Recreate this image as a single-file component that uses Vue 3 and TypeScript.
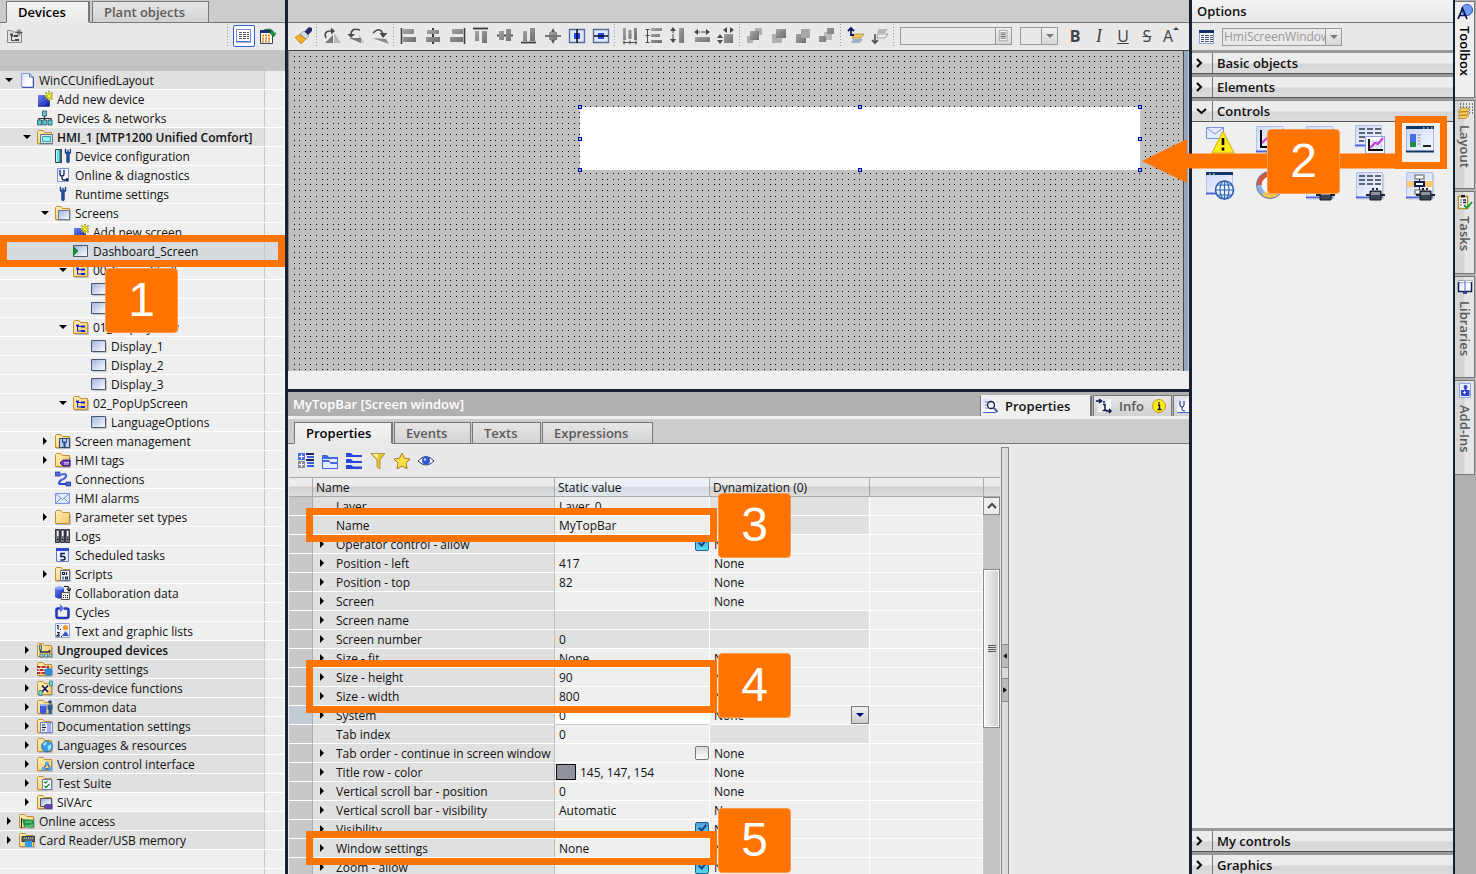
<script setup lang="ts">
import { ref } from 'vue'

interface TreeNode {
  label: string
  icon: string
  level: number
  arrow?: 'open' | 'closed'
  shade?: boolean
  bold?: boolean
  selected?: boolean
}

interface PropertyRow {
  name: string
  value?: string
  dyn?: string
  arrow?: boolean
  check?: 'on' | 'off'
  swatch?: boolean
  active?: boolean
  grayValue?: boolean
}

const folder = '<path d="M1.500 15.500h14V5" fill="none" stroke="#b9bcc6"/><path d="M.500 14.500v-12l1-1H6l1.500 2h7v11z" fill="url(#g-folder)" stroke="#c08f30"/>'
const wrench = '<path d="M10 1v4l1.500 1.500v7.500q1.500 2 3 0V6.500L16 5V1h-1v3h-1.500V2h-1v2H11V1z" fill="#1f4f9c" stroke="#163a78" stroke-width=".4"/>'
const star = '<path d="M12 0v10M7 5h10M8.500 1.500l7 7M15.500 1.500l-7 7" stroke="#8c8a10" stroke-width="1.600"/><path d="M12 1v8M8 5h8M9.500 2.500l5 5M14.500 2.500l-5 5" stroke="#ffff3c"/>'
const stetho = '<path d="M5 3v4q0 2 2 2t2-2V3M7 9v2q0 2 2 2h3" fill="none" stroke="#15205c" stroke-width="1.300"/><circle cx="12" cy="12.500" r="1.500" fill="#15205c"/>'

const icons: Record<string, string> = {
  page: '<path d="M2.500 1.500h8l3.500 3.500v10H2.500z" fill="url(#g-page)" stroke="#8a9fd6"/><path d="M10.500 1.500V5H14z" fill="#fff" stroke="#5c70b8"/><path d="M3 15.500h11.500V5" fill="none" stroke="#4257a6"/>',
  add: '<path d="M1 4h11v11H1z" fill="url(#g-deep)"/><path d="M1 15.200h11.300V8" fill="none" stroke="#101a80"/>' + star,
  network: '<path d="M7.500 5v4M2 11V8.500h12V11M7.500 8v3" fill="none" stroke="#222c3c" stroke-width="1.200"/><path d="M5.500 1h4v5h-4zM.500 10h4v5h-4zM5.700 10h4v5h-4zM11 10h4v5h-4z" fill="#55c8d4" stroke="#34505c" stroke-width=".8"/>',
  hmi: folder + '<path d="M3.500 5.500h12v9h-12z" fill="#dfe5ea" stroke="#5a7480"/><path d="M5.500 7.500h8v5h-8z" fill="#8ff4f6" stroke="#38a0a8"/>',
  config: '<path d="M.500 1.500h6v13h-6z" fill="#5fe4ec" stroke="#30424c"/><path d="M1.500 2v12" stroke="#bff"/><path d="M4.500 2v12h2V2z" fill="#4a5c66"/>' + wrench,
  diag: '<path d="M2.500 1.500h11v13h-11z" fill="url(#g-page)" stroke="#7b8fd4"/>' + stetho,
  wrench: '<g transform="translate(-5 0)">' + wrench + '</g>',
  screens: folder + '<path d="M3.500 5.500h11v9h-11z" fill="url(#g-screen)" stroke="#6b7794"/>',
  screen: '<path d="M.500 2.500h14v11H.500z" fill="url(#g-screen)" stroke="#4a566c"/><path d="M15.500 4v10.500H2" fill="none" stroke="#c4c8d0"/>',
  start: '<path d="M.500 2.500h14v11H.500z" fill="url(#g-screen)" stroke="#4a566c"/><path d="M0 3l5 5-5 5z" fill="#13922a" stroke="#0b6a1c" stroke-width=".6"/>',
  group: folder + '<path d="M4.500 6v6.500M4.500 7.500h5M5 12h5" fill="none" stroke="#1122dd"/><path d="M3 5.500h3v2H3zM8 6.500h4v2H8zM8 11h4v2H8z" fill="#1122dd"/>',
  manage: folder + '<path d="M4.500 5.500h10v9h-10z" fill="#b9cbe8" stroke="#384660"/><path d="M7 6v3l1.500 1.500V14h2v-3.500L12 9V6h-1v2.500H8V6z" fill="#1c4a96"/>',
  tags: folder + '<path d="M5 11l3-3h7v6H8z" fill="#6a3fb8" stroke="#3b1b80"/><path d="M9 10.500h5M9 12h5" stroke="#e6dcff" stroke-width=".8"/>',
  connect: '<path d="M0 1h5v4H0zM11 11h5v4h-5z" fill="#4a68e0" stroke="#20348f" stroke-width=".7"/><path d="M4 4.500q7-3 7 0T6 9q-4 4 0 4h5" fill="none" stroke="#2a49c8" stroke-width="2"/><path d="M4 4q7-3 6.500 0.500T5.500 9" fill="none" stroke="#9bb0ff" stroke-width=".6"/>',
  mail: '<path d="M.500 3.500h14v10H.500z" fill="#e3ebff" stroke="#7791dc"/><path d="M1 4l6.500 5.500L14 4M1 13l5-5M14 13L9 8" fill="none" stroke="#7791dc"/>',
  folder,
  logs: '<path d="M.500 1.500h4v13h-4zM5.500 1.500h4v13h-4zM10.500 1.500h4v13h-4z" fill="#70747e" stroke="#33363d"/><path d="M2 3h1.500v5H2zM7 3h1.500v5H7zM12 3h1.500v5H12z" fill="#eef"/><path d="M2 11.500h1.500M7 11.500h1.500M12 11.500h1.500" stroke="#111"/>',
  tasks: '<path d="M1.500 1.500h12v13h-12z" fill="#e9eeff" stroke="#6276c8"/><path d="M1 1h13v3H1z" fill="#2e49d2"/><path d="M10 6.500H6v3h2.200q1.800 0 1.800 1.700T8 13H5.500" fill="none" stroke="#111a50" stroke-width="1.500"/>',
  scripts: folder + '<path d="M5.500 4.500h9v10h-9z" fill="#f5f7ff" stroke="#5b6f9c"/><path d="M7.500 6.500h2v2h-2zM11.500 6v3M8 10.500v3M10.500 11h2v2h-2z" fill="none" stroke="#101830" stroke-width="1.100"/>',
  collab: '<path d="M0 3q4.500-3 9 0v9q-4.500 3-9 0z" fill="url(#g-deep)"/><ellipse cx="4.500" cy="3" rx="4.500" ry="1.500" fill="#8aa0ff"/><path d="M6.500 7.500h8v7h-8z" fill="#f4f4ec" stroke="#555"/><path d="M8 10.500h5M8 12.500h5" stroke="#222" stroke-dasharray="1 1"/><path d="M9 1.500h3.500q1.500 0 1.500 3M12 3.500l2 2.500 2-2.500" fill="none" stroke="#111" stroke-width="1.200"/>',
  cycles: '<path d="M5 4.500H3Q1.500 4.500 1.500 6v6q0 2 2 2h8q2 0 2-2V6q0-1.500-2-1.500H9" fill="none" stroke="#2438b8" stroke-width="2.600"/><path d="M5 0l4.500 4.500L5 8.500z" fill="#5f78ec"/>',
  lists: '<path d="M.500 .500h14v14H.500z" fill="#eef2ff" stroke="#9aa8d8"/><path d="M2 2.500h1v4M5 6.500h1M2 9.500h2v1.500l-2 2h3M6 13.500h1" fill="none" stroke="#111" stroke-width="1.100"/><circle cx="10.500" cy="4.500" r="2.600" fill="#f59a1c"/><path d="M10.500 8l3.500 5H7z" fill="#3350d2"/>',
  ungrouped: folder + '<path d="M3.500 3v7h9V8" fill="none" stroke="#222c3c" stroke-width="1.500"/><path d="M2.500 3h2v5h-2z" fill="#6fe0ea" stroke="#334" stroke-width=".7"/><path d="M3 12h3v3H3zM7.500 12h3v3h-3zM12 12h3v3h-3z" fill="#7de8f2" stroke="#445" stroke-width=".6"/>',
  security: folder + '<path d="M0 5h12v8H0z" fill="#b3291b"/><path d="M0 7.500h12M0 10.500h12M4 5v2.500M9 5v2.500M2 7.500v3M7 7.500v3M4 10.500V13" stroke="#fff" stroke-width=".9"/><circle cx="11.500" cy="11" r="4" fill="#2b8ad0"/>',
  cross: folder + '<path d="M4.500 5.500h7v7h-7z" fill="#fff4d0"/><path d="M5 5.500l6 6.500M11 5.500L5 12" stroke="#10184e" stroke-width="1.800"/><path d="M12.500 1h3v5h-3zM2 10.500h3v5H2z" fill="#65dce6" stroke="#37707a" stroke-width=".7"/>',
  common: folder + '<path d="M3 6q3-2 6.500 0v8Q6 16 3 14z" fill="#3d56dc"/><ellipse cx="6.200" cy="6" rx="3.200" ry="1.200" fill="#9db0ff"/><circle cx="13" cy="3" r="1.800" fill="#2b4a78"/><path d="M10.500 5.500h5v5l-1 .5v4h-3v-4l-1-.5z" fill="#2b5a92"/>',
  docs: folder + '<path d="M3.500 4.500h12v10h-12z" fill="#e8edff" stroke="#7080b8"/><path d="M5 7h3M5 9.500h4M5 12h3" stroke="#10183c" stroke-width="1.200"/><path d="M11 5v9M13 5v9" stroke="#5b74d8"/>',
  lang: folder + '<circle cx="10" cy="9.500" r="5.500" fill="#3a9be0" stroke="#1c62a8" stroke-width=".7"/><path d="M6 7q2-3 4-2l-1 3-2 1zM10.500 9l3.500-2 .5 4-3 3z" fill="#9fe0f4"/>',
  version: folder + '<path d="M10 7l-3.500 6h7z" fill="none" stroke="#2d55a8" stroke-width="1.300"/><circle cx="10" cy="7.500" r="2" fill="#4da8e8"/><circle cx="6.500" cy="13" r="2" fill="#4da8e8"/><circle cx="13.500" cy="13" r="2" fill="#4da8e8"/>',
  test: folder + '<path d="M5.500 4.500h9v10h-9z" fill="#f7f9ff" stroke="#6a7cb0"/><path d="M7 7l1.500 1 2-2M7.500 11l1.500 1.500 3.500-3.500" fill="none" stroke="#178a30" stroke-width="1.300"/>',
  sivarc: folder + '<path d="M3.500 4.500h11v8h-11z" fill="url(#g-screen)" stroke="#56585e"/><path d="M7 12l2-1.500h6v4H8z" fill="#6540b0" stroke="#38207a" stroke-width=".6"/>',
  online: folder + '<path d="M3 6l12 1v7l-3 1-7-1z" fill="#1c9448"/><path d="M2.500 5v10" stroke="#222"/><path d="M6 9h7M7 15v-3M9 15v-3M11 15v-3M13 14v-3" stroke="#aef0b8" stroke-width=".8"/>',
  card: folder + '<path d="M3 4.500h13v5H3z" fill="#5a636e" stroke="#2a323c"/><path d="M5 6h9" stroke="#d5dde5" stroke-dasharray="1 1"/><path d="M6 9h7v6H7.500L6 13.500z" fill="#2b9be8"/>',
}

const tools: Record<string, string> = {
  brush: '<path d="M11 6l5-5 3 1 0 3-5 5z" fill="#252a66"/><path d="M11 5l5 5-3 3-6-5z" fill="#d8dce8" stroke="#6b7086" stroke-width=".6"/><path d="M6.500 8.500l6.500 4.500-5 5L2 11.500z" fill="#f6b022" stroke="#a3631a" stroke-width=".6"/>',
  rotR: '<path d="M12 7l7 10H12z" fill="#b9b9b9"/><path d="M11 9L3 17h8z" fill="#777"/><path d="M4 12Q1 5 9 5" fill="none" stroke="#4a4a4a" stroke-width="1.600"/><path d="M9 1.500l4 3.500-4 3.500z" fill="#4a4a4a"/>',
  rotL: '<path d="M13 8l6 9h-6z" fill="#ccc"/><path d="M3 12h12v5z" fill="#777"/><path d="M14 4Q5 1 5 9" fill="none" stroke="#4a4a4a" stroke-width="1.600"/><path d="M1.500 8H9l-4 4z" fill="#4a4a4a"/>',
  rot: '<path d="M2 12l14 1 3 5z" fill="#8c8c8c"/><path d="M3 7Q10 0 13 8" fill="none" stroke="#4a4a4a" stroke-width="1.600"/><path d="M9.500 7h8L13 12z" fill="#4a4a4a"/>',
  alL: '<path d="M2.500 2v16" stroke="#3c3c3c" stroke-width="1.600"/><path d="M4 3h11v5H4zM4 11h13v5H4z" fill="url(#g-gray)"/>',
  alC: '<path d="M10 2v16" stroke="#3c3c3c" stroke-width="2"/><path d="M4 4h12v4H4zM3 11h14v5H3z" fill="url(#g-gray)"/>',
  alR: '<path d="M17.500 2v16" stroke="#3c3c3c" stroke-width="1.600"/><path d="M5 3h11v5H5zM3 11h13v5H3z" fill="url(#g-gray)"/>',
  alT: '<path d="M2 2.500h15" stroke="#3c3c3c" stroke-width="1.800"/><path d="M4 5h4v10H4zM11 5h5v12h-5z" fill="url(#g-gray)"/>',
  alM: '<path d="M2 9.500h16" stroke="#3c3c3c" stroke-width="1.800"/><path d="M4 5h5v9H4zM11 3h5v12h-5z" fill="url(#g-gray)"/>',
  alB: '<path d="M2 16.500h15" stroke="#3c3c3c" stroke-width="1.800"/><path d="M4 5h4v10H4zM11 2h5v13h-5z" fill="url(#g-gray)"/>',
  center: '<path d="M6 6h8v8H6z" fill="url(#g-gray)"/><path d="M2 9h16v2H2z" fill="#777"/><path d="M10 2l2 4H8zM10 18l2-4H8z" fill="#555"/>',
  midH: '<path d="M2.500 3.500h15v13h-15z" fill="#dbe6ff" stroke="#5e6f96" stroke-width="1.400"/><path d="M7 7h6v6H7z" fill="#2546f0"/><path d="M10 3v14" stroke="#000" stroke-width="1.400"/>',
  midV: '<path d="M2.500 3.500h15v13h-15z" fill="#dbe6ff" stroke="#5e6f96" stroke-width="1.400"/><path d="M7 7h6v6H7z" fill="#2546f0"/><path d="M3 10h14" stroke="#000" stroke-width="1.400"/>',
  spH: '<path d="M3 2h3v12H3zM8.500 4h3v9h-3zM14 2h3v12h-3z" fill="url(#g-gray)"/><path d="M3 16.500h14M4 14.500v4M10 14.500v4M16 14.500v4" stroke="#4a4a4a"/>',
  spV: '<path d="M7 2h11v3H7zM7 8h9v3H7zM7 14h11v3H7z" fill="url(#g-gray)"/><path d="M3.500 3v14M1.500 3.500h4M1.500 9.500h4M1.500 16.500h4" stroke="#4a4a4a"/>',
  szV: '<path d="M11 2h5v15h-5z" fill="url(#g-gray)"/><path d="M5 2v14" stroke="#4a4a4a" stroke-dasharray="5 1"/><path d="M5 1l3 4H2zM5 17l3-4H2z" fill="#4a4a4a"/>',
  szH: '<path d="M3 11h15v5H3z" fill="url(#g-gray)"/><path d="M3 6h14" stroke="#4a4a4a" stroke-dasharray="5 1"/><path d="M2 6l4-3v6zM18 6l-4-3v6z" fill="#4a4a4a"/>',
  szB: '<path d="M8 8h9v9H8z" fill="url(#g-gray)"/><path d="M7 4l4-3v6zM18 4l-4-3v6zM4 8l3 4H1zM4 18l3-4H1z" fill="#4a4a4a"/>',
  front: '<path d="M10 2h7v7h-7zM2 10h6v7H2z" fill="#b0b0b0"/><path d="M5 5h9v9H5z" fill="url(#g-gray)"/>',
  fwd: '<path d="M3 8h10v9H3z" fill="#b0b0b0"/><path d="M7 3h10v9H7z" fill="url(#g-gray)"/>',
  bwd: '<path d="M3 8h10v9H3z" fill="url(#g-gray)"/><path d="M8 3h9v9H8z" fill="#a8a8a8"/>',
  back: '<path d="M7 6h8v8H7z" fill="#b8b8b8"/><path d="M10 2h7v6h-7zM2 10h7v6H2z" fill="url(#g-gray)"/>',
  layUp: '<path d="M7 13h10l-3 4H5z" fill="#9db0c4"/><path d="M8 8h10l-3 4H6z" fill="#f4cc62" stroke="#a37a20" stroke-width=".7"/><path d="M2 5l3-3 3 3M5 3v6h3" fill="none" stroke="#101a5c" stroke-width="1.800"/>',
  layDn: '<path d="M9 3h9l-3 4H7z" fill="#b5b5b5"/><path d="M8 8h10l-3 4H7z" fill="#ededed" stroke="#8c8c8c" stroke-width=".8"/><path d="M5 8v8M2 14l3 3 3-3" fill="none" stroke="#4a4a4a" stroke-width="1.600"/>',
}
const toolGroups: string[][] = [
  ['brush'],
  ['rotR', 'rotL', 'rot'],
  ['alL', 'alC', 'alR', 'alT', 'alM', 'alB', 'center', 'midH', 'midV'],
  ['spH', 'spV', 'szV', 'szH', 'szB'],
  ['front', 'fwd', 'bwd', 'back'],
  ['layUp', 'layDn'],
]

const sheet = '<path d="M1.500 1.500h26v25h-26z" fill="url(#g-sheet)" stroke="#b4c0ea"/><path d="M1 26.500h27" stroke="#4a66dc" stroke-width="2"/><path d="M28.700 3v25H3" fill="none" stroke="#c6cad6"/>'
const plug = '<path d="M11 24h5M25 24h5M18 19v-2M22 19v-2" stroke="#1c2430" stroke-width="2"/><path d="M15 20h11v9H15z" fill="#39424e" stroke="#161c26"/><path d="M16 21h9v3h-9z" fill="#8a929c"/>'
const grid = '<path d="M4 5h6M12 5h6M20 5h6M4 9h6M12 9h6M20 9h6M4 13h6M12 13h6M20 13h6" stroke="#5c6670" stroke-width="2"/>'
const win = '<path d="M1.500 3.500h27v23h-27z" fill="url(#g-sheet)" stroke="#a9b6e4"/><path d="M1 1h28v3H1z" fill="#0f3768"/>'
const trend = '<path d="M6 5v17h20" fill="none" stroke="#000" stroke-width="2"/><path d="M7 18l7-7 4 3 7-8" fill="none" stroke="#c33bd8" stroke-width="2"/>'
const palette: { title: string; art: string }[] = [
  { title: 'Alarm control', art: '<path d="M1.500 2.500h17v11h-17z" fill="#e3ebff" stroke="#7791dc"/><path d="M2 3l8 6 8-6" fill="none" stroke="#7791dc"/><path d="M18 6l11 22H7z" fill="#ffec16" stroke="#c9ae10"/><path d="M18 13v7M18 22.500v3" stroke="#000" stroke-width="2.600"/>' },
  { title: 'Trend control', art: sheet + trend },
  { title: 'Table view', art: sheet + grid },
  { title: 'Trend companion', art: '<path d="M.500 .500h26v20h-26z" fill="url(#g-sheet)" stroke="#b4c0ea"/><path d="M0 20.500h11" stroke="#4a66dc" stroke-width="2"/><path d="M4 4h6M12 4h6M20 4h6M4 8h6M12 8h6M20 8h6M4 12h6M4 16h5" stroke="#5c6670" stroke-width="2"/><path d="M10.500 11.500h19v17h-19z" fill="#f7f9ff" stroke="#8fa0dc"/><path d="M18 15v9M22 15v9M26 15v9M15 17h12M15 21h12" stroke="#b7c3ee" stroke-width=".8"/><path d="M14 14v11h14" fill="none" stroke="#000" stroke-width="1.800"/><path d="M15 23l5-5 3 1 5-6" fill="none" stroke="#c33bd8" stroke-width="2"/>' },
  { title: 'Screen window', art: win + '<path d="M18 3h1.500M22 3h1.500M26 3h1.500" stroke="#fff"/><path d="M1 26.500h28" stroke="#0f3768" stroke-width="2"/><path d="M5 9h6v9H5z" fill="#4a6cf0"/><path d="M5 17h6v5H5z" fill="#1d8d48"/><path d="M12.500 10h3M12.500 13h3M12.500 16h3M12.500 19h3" stroke="#8490a4"/><path d="M18 21h8" stroke="#222" stroke-width="2"/>' },
  { title: 'Browser', art: '<path d="M1.500 3.500h26v19h-26z" fill="url(#g-sheet)" stroke="#b4c0ea"/><path d="M1 1h27v3H1z" fill="#0f3768"/><path d="M4 3h1.500M8 3h1.500" stroke="#fff"/><path d="M1 22.500h13" stroke="#4a66dc" stroke-width="2"/><circle cx="19.500" cy="19" r="9" fill="#eaf6ff" stroke="#2c62b0" stroke-width="1.600"/><path d="M19.500 10v18M10.500 19h18M12.500 14h14M12.500 24h14" fill="none" stroke="#2c62b0" stroke-width="1.200"/><ellipse cx="19.500" cy="19" rx="4.500" ry="9" fill="none" stroke="#2c62b0" stroke-width="1.200"/>' },
  { title: 'Gauge', art: '<circle cx="15" cy="14" r="11" fill="#f4f7ff" stroke="#8fb0dc" stroke-width="5"/><path d="M4 14A11 11 0 0 1 15 3" fill="none" stroke="#d8563c" stroke-width="5"/><path d="M8 22.500A11 11 0 0 0 22 22.500" fill="none" stroke="#f0c050" stroke-width="5"/><circle cx="15" cy="14" r="13.500" fill="none" stroke="#5f78b0"/>' },
  { title: 'Parameter set', art: sheet + grid + plug },
  { title: 'Process table', art: sheet + grid + plug },
  { title: 'Process diagram', art: sheet + '<path d="M2 10h26v6H2z" fill="#fcc878"/><path d="M10 4h9v4h-9zM10 19h9v4h-9z" fill="#fff" stroke="#8c9098" stroke-width="1.600"/><path d="M14.500 8v11" stroke="#222"/><path d="M10 11h9v4h-9z" fill="#fff" stroke="#0f1f4e" stroke-width="2"/>' + plug },
]

const nodes = ref<TreeNode[]>([
  { label: 'WinCCUnifiedLayout', icon: 'page', level: 0, arrow: 'open', shade: true },
  { label: 'Add new device', icon: 'add', level: 1 },
  { label: 'Devices & networks', icon: 'network', level: 1 },
  { label: 'HMI_1 [MTP1200 Unified Comfort]', icon: 'hmi', level: 1, arrow: 'open', shade: true, bold: true },
  { label: 'Device configuration', icon: 'config', level: 2 },
  { label: 'Online & diagnostics', icon: 'diag', level: 2 },
  { label: 'Runtime settings', icon: 'wrench', level: 2 },
  { label: 'Screens', icon: 'screens', level: 2, arrow: 'open' },
  { label: 'Add new screen', icon: 'add', level: 3 },
  { label: 'Dashboard_Screen', icon: 'start', level: 3, selected: true },
  { label: '00_ScreenShell', icon: 'group', level: 3, arrow: 'open' },
  { label: '', icon: 'screen', level: 4 },
  { label: '', icon: 'screen', level: 4 },
  { label: '01_DisplayView', icon: 'group', level: 3, arrow: 'open' },
  { label: 'Display_1', icon: 'screen', level: 4 },
  { label: 'Display_2', icon: 'screen', level: 4 },
  { label: 'Display_3', icon: 'screen', level: 4 },
  { label: '02_PopUpScreen', icon: 'group', level: 3, arrow: 'open' },
  { label: 'LanguageOptions', icon: 'screen', level: 4 },
  { label: 'Screen management', icon: 'manage', level: 2, arrow: 'closed' },
  { label: 'HMI tags', icon: 'tags', level: 2, arrow: 'closed' },
  { label: 'Connections', icon: 'connect', level: 2 },
  { label: 'HMI alarms', icon: 'mail', level: 2 },
  { label: 'Parameter set types', icon: 'folder', level: 2, arrow: 'closed' },
  { label: 'Logs', icon: 'logs', level: 2 },
  { label: 'Scheduled tasks', icon: 'tasks', level: 2 },
  { label: 'Scripts', icon: 'scripts', level: 2, arrow: 'closed' },
  { label: 'Collaboration data', icon: 'collab', level: 2 },
  { label: 'Cycles', icon: 'cycles', level: 2 },
  { label: 'Text and graphic lists', icon: 'lists', level: 2 },
  { label: 'Ungrouped devices', icon: 'ungrouped', level: 1, arrow: 'closed', shade: true, bold: true },
  { label: 'Security settings', icon: 'security', level: 1, arrow: 'closed', shade: true },
  { label: 'Cross-device functions', icon: 'cross', level: 1, arrow: 'closed', shade: true },
  { label: 'Common data', icon: 'common', level: 1, arrow: 'closed', shade: true },
  { label: 'Documentation settings', icon: 'docs', level: 1, arrow: 'closed', shade: true },
  { label: 'Languages & resources', icon: 'lang', level: 1, arrow: 'closed', shade: true },
  { label: 'Version control interface', icon: 'version', level: 1, arrow: 'closed', shade: true },
  { label: 'Test Suite', icon: 'test', level: 1, arrow: 'closed', shade: true },
  { label: 'SiVArc', icon: 'sivarc', level: 1, arrow: 'closed' },
  { label: 'Online access', icon: 'online', level: 0, arrow: 'closed', shade: true },
  { label: 'Card Reader/USB memory', icon: 'card', level: 0, arrow: 'closed', shade: true },
  { label: '', icon: '', level: 0 },
  { label: '', icon: '', level: 0 },
])

const rows = ref<PropertyRow[]>([
  { name: 'Layer', value: 'Layer_0' },
  { name: 'Name', value: 'MyTopBar' },
  { name: 'Operator control - allow', arrow: true, check: 'on', dyn: 'None' },
  { name: 'Position - left', arrow: true, value: '417', dyn: 'None' },
  { name: 'Position - top', arrow: true, value: '82', dyn: 'None' },
  { name: 'Screen', arrow: true, dyn: 'None' },
  { name: 'Screen name', arrow: true, grayValue: true },
  { name: 'Screen number', arrow: true, value: '0', grayValue: true },
  { name: 'Size - fit', arrow: true, value: 'None', dyn: 'None' },
  { name: 'Size - height', arrow: true, value: '90', dyn: 'None' },
  { name: 'Size - width', arrow: true, value: '800', dyn: 'None' },
  { name: 'System', arrow: true, value: '0', dyn: 'None', active: true },
  { name: 'Tab index', value: '0' },
  { name: 'Tab order - continue in screen window', arrow: true, check: 'off', dyn: 'None' },
  { name: 'Title row - color', arrow: true, value: '145, 147, 154', swatch: true, dyn: 'None' },
  { name: 'Vertical scroll bar - position', arrow: true, value: '0', dyn: 'None' },
  { name: 'Vertical scroll bar - visibility', arrow: true, value: 'Automatic', dyn: 'None' },
  { name: 'Visibility', arrow: true, check: 'on', dyn: 'None' },
  { name: 'Window settings', arrow: true, value: 'None', dyn: 'None' },
  { name: 'Zoom - allow', arrow: true, check: 'on', dyn: 'None' },
])

const dots = [0, 5, 11, 16, 22]
const dotPath = dots.map((y) => dots.map((x) => `M${x} ${y}h1v1h-1z`).join('')).join('')
const handles = ['tl', 'tc', 'tr', 'ml', 'mr', 'bl', 'bc', 'br']
const inspectorTabs = ['Properties', 'Events', 'Texts', 'Expressions']

const sideTabs = [
  { label: 'Toolbox', cls: 'toolbox', art: '<circle cx="10" cy="6" r="5.500" fill="#6f9cf8" stroke="#2f56b8"/><path d="M1 15L5.500 4.500 10 15M3 11.500h5.500" fill="none" stroke="#0c1450" stroke-width="1.700"/>' },
  { label: 'Layout', cls: 'layout', art: '<path d="M3 1h13M3 4h13M6 7h10M9 10h7" stroke="#111" stroke-dasharray="1 2"/><path d="M4 5h8l-3 4H1zM4 8.500h8l-3 4H1zM4 12h8l-3 3.500H1z" fill="#f7cd63" stroke="#a87a1e" stroke-width=".7"/>' },
  { label: 'Tasks', cls: 'tasks', art: '<path d="M1.500 2.500h9v12h-9z" fill="#fff" stroke="#b98b20" stroke-width="1.400"/><path d="M4 1h4v2.500H4z" fill="#222"/><path d="M3.500 6h1M6 6h3M3.500 8.500h1M6 8.500h3M3.500 11h1" stroke="#111a50" stroke-width="1.300"/><path d="M7 11l3 3 5-6" fill="none" stroke="#12a02e" stroke-width="1.900"/>' },
  { label: 'Libraries', cls: 'libraries', art: '<path d="M1.500 2.500h13v10h-13z" fill="url(#g-page)" stroke="#141d58" stroke-width="1.500"/><path d="M1 2.500h14" stroke="#fff"/><path d="M8 2v11" stroke="#4a62d0"/><path d="M6 14h4" stroke="#141d58" stroke-width="1.500"/>' },
  { label: 'Add-Ins', cls: 'addins', art: '<path d="M2.500 .500h11v14h-11z" fill="#eef2ff" stroke="#8fa2e8"/><circle cx="8.500" cy="4" r="2" fill="#2b46cc"/><path d="M4 7h8.500v6H4zM7.500 5h2v2h-2z" fill="#2b46cc"/><path d="M6 9.500h3M7.500 8v3" stroke="#fff"/>' },
]
</script>

<template>
  <div class="app">
    <svg class="defs" width="0" height="0" aria-hidden="true">
      <linearGradient id="g-folder" x1="0" y1="0" x2="1" y2="1"><stop offset="0" stop-color="#fff0b8" /><stop offset="1" stop-color="#f3c766" /></linearGradient>
      <linearGradient id="g-page" x1="0" y1="0" x2="1" y2="1"><stop offset="0" stop-color="#cbd8fa" /><stop offset=".6" stop-color="#fff" /></linearGradient>
      <linearGradient id="g-sheet" x1="0" y1="0" x2="1" y2="1"><stop offset="0" stop-color="#ccd8fa" /><stop offset="1" stop-color="#fafbff" /></linearGradient>
      <linearGradient id="g-deep" x1="0" y1="0" x2="1" y2="1"><stop offset="0" stop-color="#6c86f4" /><stop offset="1" stop-color="#1220b4" /></linearGradient>
      <linearGradient id="g-screen" x1="0" y1="0" x2="1" y2="1"><stop offset="0" stop-color="#9fb2de" /><stop offset="1" stop-color="#fff" /></linearGradient>
      <linearGradient id="g-gray" x1="0" y1="0" x2="1" y2="1"><stop offset="0" stop-color="#a6a6a6" /><stop offset="1" stop-color="#6f6f6f" /></linearGradient>
    </svg>

    <aside class="project">
      <div class="tabbar">
        <button class="tab current">Devices</button>
        <button class="tab wide">Plant objects</button>
      </div>
      <div class="toolbar project-tools">
        <button class="icon-btn" aria-label="New group">
          <svg viewBox="0 0 16 16"><path d="M.5 14.500v-12h4l1 1.500h9v10.500z" fill="#e2e2e2" stroke="#888" /><path d="M4.500 6v6.500h3M4.500 8h3" fill="none" stroke="#444" /><path d="M3 5.500h3v2H3zM7 7h4v2H7zM8 11h4v2H8z" fill="#444" /><path d="M12 1v7M8.500 4.500h7M10 2.500l4 4M14 2.500l-4 4" stroke="#555" /></svg>
        </button>
        <span class="grow"></span>
        <i class="sep"></i>
        <button class="icon-btn on" aria-label="List view">
          <svg viewBox="0 0 16 16"><path d="M.5 1.500h14v12H.5z" fill="#fff" stroke="#7d8ed0" /><path d="M0 14h15" stroke="#3c56c8" /><path d="M3 4.500h10M3 6.500h10M3 8.500h10M3 10.500h10" stroke="#555" stroke-dasharray="3 1" /></svg>
        </button>
        <button class="icon-btn" aria-label="Export">
          <svg viewBox="0 0 16 16"><path d="M.5 3.500h12v12H.5z" fill="#fff" stroke="#345" /><path d="M0 2h11v3H0z" fill="#13336e" /><path d="M2 7.500h9M2 10.500h9M2 13.500h9" stroke="#e08a1c" stroke-width="2" stroke-dasharray="2 1" /><path d="M4 2q6-2 8 3h-2l3.500 4L16 5h-2Q12-1 4 2z" fill="#1c9636" stroke="#0c6a20" stroke-width=".6" /></svg>
        </button>
      </div>
      <div class="band"></div>
      <ul class="tree">
        <li v-for="(n, i) in nodes" :key="i" class="node" :class="{ shade: n.shade, bold: n.bold, selected: n.selected }">
          <span class="cell" :style="{ paddingLeft: n.level * 18 + 1 + 'px' }">
            <button v-if="n.arrow" class="twist" :aria-label="'Toggle ' + n.label">
              <svg viewBox="0 0 16 16"><path :d="n.arrow === 'open' ? 'M4 6h8l-4 4z' : 'M6 4l4 4-4 4z'" /></svg>
            </button>
            <span v-else class="twist"></span>
            <svg v-if="n.icon" class="ico" viewBox="0 0 16 16" v-html="icons[n.icon]"></svg>
            <span class="lbl">{{ n.label }}</span>
          </span>
          <span class="status"></span>
        </li>
      </ul>
      <div class="mark mark-tree"></div>
      <div class="badge badge-1">1</div>
    </aside>

    <main class="center">
      <div class="topband"></div>
      <div class="toolbar editor-tools">
        <template v-for="(g, gi) in toolGroups" :key="gi">
          <button v-for="t in g" :key="t" class="tool" :aria-label="t"><svg viewBox="0 0 20 20" v-html="tools[t]"></svg></button>
          <i class="sep"></i>
        </template>
        <span class="combo font-box"><input type="text" aria-label="Font" /><button aria-label="Choose font"><svg viewBox="0 0 16 16"><path d="M2.500 1.500h9v12h-9z" fill="#f4f4f4" stroke="#999" /><path d="M4 4.500h6M4 6.500h6M4 8.500h6M4 10.500h6" stroke="#555" /></svg></button></span>
        <span class="combo size-box"><select aria-label="Font size"></select><i class="drop"></i></span>
        <button class="tool fmt b">B</button>
        <button class="tool fmt i">I</button>
        <button class="tool fmt u">U</button>
        <button class="tool fmt s">S</button>
        <button class="tool fmt a">A<svg viewBox="0 0 6 4"><path d="M3 0l3 3H0z" /></svg></button>
      </div>
      <div class="stage">
        <div class="canvas">
          <svg class="dots" width="100%" height="100%" aria-hidden="true">
            <pattern id="dot-grid" x="5" y="5" width="28" height="28" patternUnits="userSpaceOnUse"><path :d="dotPath" fill="#000" shape-rendering="crispEdges" /></pattern>
            <rect width="100%" height="100%" fill="url(#dot-grid)" />
          </svg>
          <div class="object"><i v-for="h in handles" :key="h" :class="h"></i></div>
        </div>
        <div class="stage-edge"></div>
      </div>
      <div class="stage-foot"></div>

      <section class="inspector">
        <header class="title">
          <h2>MyTopBar [Screen window]</h2>
          <button class="pane current"><svg viewBox="0 0 16 16"><path d="M1 1h13v13H1z" fill="url(#g-page)" /><path d="M1 14.500h13" stroke="#4a66dc" /><path d="M3 4h4M3 7h3M3 10h4" stroke="#889" /><circle cx="9" cy="7" r="3.500" fill="#eaf4ff" stroke="#151c48" stroke-width="1.300" /><path d="M11.500 9.500l4 4.500" stroke="#4a62a8" stroke-width="2" /></svg>Properties</button>
          <button class="pane info"><svg viewBox="0 0 16 16"><path d="M2 1h13v13H2z" fill="url(#g-page)" /><path d="M0 3h5M3 1l2.500 2L3 5M10 13h5M13 11l2 2-2 2M7 6.500h2v6M6.500 12.500h5M8 3v2" fill="none" stroke="#0e1548" stroke-width="1.500" /></svg>Info<svg class="tip" viewBox="0 0 16 16"><circle cx="8" cy="8" r="6.500" fill="#ffe920" stroke="#c09c10" /><path d="M7 7h1.500v4.500M6.500 11.500h4M8 4v1.500" fill="none" stroke="#111" stroke-width="1.400" /></svg></button>
          <button class="pane cut" aria-label="Diagnostics"><svg viewBox="0 0 16 16"><path d="M2 1h13v13H2z" fill="url(#g-page)" /><path d="M2 14.500h13" stroke="#4a66dc" /><path d="M5 3v4q0 2 2 2t2-2V3M7 9v2q0 2 3 2" fill="none" stroke="#15205c" /></svg></button>
        </header>
        <div class="subtabs">
          <button v-for="(t, i) in inspectorTabs" :key="t" class="tab" :class="{ current: i === 0 }">{{ t }}</button>
        </div>
        <div class="body">
          <div class="props">
            <div class="prop-tools">
              <button aria-label="Expand"><svg viewBox="0 0 18 18"><path d="M1 1h7v7H1z" fill="#4f6bea" /><path d="M1 9h7v7H1z" fill="#8a8f9c" /><path d="M4.500 2v5M2 4.500h5M4.500 10v5M2 12.500h5" stroke="#fff" /><path d="M9 2h8M9 8h8" stroke="#16245e" stroke-width="2" /><path d="M10 5h7M10 11h7M10 14h7" stroke="#3c5ae6" stroke-width="2" /></svg></button>
              <button aria-label="Groups"><svg viewBox="0 0 18 18"><path d="M1 17V3h5l2 2h9v12z" fill="#4465e4" /><path d="M2 10h6l2 2h6v4H2zM2 7h14v3H9L8 8H2z" fill="#e6edff" /></svg></button>
              <button aria-label="All groups"><svg viewBox="0 0 18 18"><path d="M1 1h5l2 2h9v2H1zM1 7h5l2 2h9v2H1zM1 13h5l2 1.500h9V17H1z" fill="#2845dc" /></svg></button>
              <button aria-label="Filter"><svg viewBox="0 0 18 18"><path d="M2 1.500h14l-5 6.500v9l-3-2V8z" fill="#e8c43a" stroke="#a8872a" stroke-width=".8" /><path d="M4 2h5L8.500 7z" fill="#fff3a8" /></svg></button>
              <button aria-label="Favorites"><svg viewBox="0 0 18 18"><path d="M9 1l2.500 5.200 5.500.8-4 4 1 5.700-5-2.700-5 2.700L5 11 1 7l5.500-.8z" fill="#ffe04a" stroke="#a57a14" /></svg></button>
              <button aria-label="Preview"><svg viewBox="0 0 18 18"><path d="M1 9q8-9 16 0-8 8-16 0z" fill="#fff" stroke="#2b3a70" /><circle cx="9" cy="8.500" r="4" fill="#3153d8" /><circle cx="8" cy="7.500" r="1.300" fill="#c6d6ff" /></svg></button>
            </div>
            <div class="grid">
              <table>
                <colgroup><col class="c0" /><col class="c1" /><col class="c2" /><col class="c3" /><col /></colgroup>
                <thead>
                  <tr><th></th><th>Name</th><th class="hot">Static value</th><th>Dynamization (0)</th><th></th></tr>
                </thead>
                <tbody>
                  <tr v-for="r in rows" :key="r.name" :class="{ active: r.active }">
                    <td class="gut"></td>
                    <td class="nm"><span class="vbox"><svg viewBox="0 0 16 16"><path v-if="r.arrow" d="M6 4l4 4-4 4z" /></svg><span class="vtext">{{ r.name }}</span></span></td>
                    <td class="val" :class="{ gray: r.grayValue }">
                      <span class="vbox">
                        <i v-if="r.swatch" class="swatch"></i>
                        <input v-if="r.active" v-model="r.value" type="text" :aria-label="r.name" />
                        <span v-else class="vtext">{{ r.value }}</span>
                        <input v-if="r.check" type="checkbox" :checked="r.check === 'on'" :aria-label="r.name" />
                      </span>
                    </td>
                    <td class="dyn" :class="{ gray: !r.dyn }">
                      <span class="vbox"><span class="vtext">{{ r.dyn }}</span><button v-if="r.active" class="pick" aria-label="Choose dynamization"><svg viewBox="0 0 16 14"><path d="M4 5h8l-4 4z" fill="#00007c" /></svg></button></span>
                    </td>
                    <td></td>
                  </tr>
                </tbody>
              </table>
              <div class="scroll">
                <span class="corner"></span>
                <button class="up" aria-label="Scroll up"><svg viewBox="0 0 14 14"><path d="M3 9l4-4 4 4" fill="none" stroke="#444" stroke-width="2" /></svg></button>
                <span class="thumb"><i></i></span>
              </div>
              <div class="mark m3"></div>
              <div class="mark m4"></div>
              <div class="mark m5"></div>
              <div class="badge b3">3</div>
              <div class="badge b4">4</div>
              <div class="badge b5">5</div>
            </div>
          </div>
          <div class="splitter"><button aria-label="Collapse left"><svg viewBox="0 0 6 24"><path d="M5 9v6l-4-3z" /></svg></button><button aria-label="Collapse right"><svg viewBox="0 0 6 24"><path d="M1 9v6l4-3z" /></svg></button></div>
          <div class="rest"></div>
        </div>
      </section>
    </main>

    <aside class="options">
      <h2 class="opt-title">Options</h2>
      <div class="toolbar opt-tools">
        <svg viewBox="0 0 16 16"><path d="M.5 1.500h14v13H.5z" fill="#f4f6ff" stroke="#8fa2d8" /><path d="M0 1h15v3H0z" fill="#12316a" /><path d="M2 6.500h3M2 8.500h3M2 10.500h3M2 12.500h3M6 6.500h4M6 8.500h4M6 10.500h4M6 12.500h4M11 6.500h3M11 8.500h3M11 10.500h3M11 12.500h3" stroke="#4a5870" /></svg>
        <span class="combo obj-box"><select aria-label="Object type" disabled><option>HmiScreenWindow</option></select><i class="drop"></i></span>
      </div>
      <button class="acc"><svg viewBox="0 0 20 20"><path d="M5 6l4 4-4 4" /></svg><span>Basic objects</span></button>
      <button class="acc"><svg viewBox="0 0 20 20"><path d="M5 6l4 4-4 4" /></svg><span>Elements</span></button>
      <button class="acc"><svg viewBox="0 0 20 20"><path d="M5 8l4.500 4 4.500-4" /></svg><span>Controls</span></button>
      <div class="palette">
        <button v-for="p in palette" :key="p.title" :aria-label="p.title"><svg viewBox="0 0 30 30" v-html="p.art"></svg></button>
        <div class="mark m2"></div>
        <svg class="arrow" viewBox="0 0 254 44" aria-hidden="true"><path d="M0 22L45 0v14.500h209v15H45V44z" /></svg>
        <div class="badge b2">2</div>
      </div>
      <button class="acc"><svg viewBox="0 0 20 20"><path d="M5 6l4 4-4 4" /></svg><span>My controls</span></button>
      <button class="acc"><svg viewBox="0 0 20 20"><path d="M5 6l4 4-4 4" /></svg><span>Graphics</span></button>
    </aside>

    <nav class="side">
      <button v-for="(t, i) in sideTabs" :key="t.label" :class="[t.cls, { current: i === 0 }]"><svg viewBox="0 0 16 16" v-html="t.art"></svg><span>{{ t.label }}</span></button>
    </nav>
  </div>
</template>

<style>
body {
  margin: 0;
}
</style>

<style scoped>
.app {
  display: flex;
  height: 100vh;
  overflow: hidden;
  background: #1a2033;
  color: #111;
  font: 12px/18px "Open Sans", "Noto Sans", sans-serif;
}
.app *,
.app *::before {
  box-sizing: border-box;
}
.defs {
  position: absolute;
}
button,
input,
select {
  margin: 0;
  padding: 0;
  border: 0;
  background: none;
  color: inherit;
  font: inherit;
}
h2 {
  margin: 0;
}
svg {
  display: block;
  flex: none;
}
.grow {
  flex: 1;
}
.toolbar {
  display: flex;
  align-items: center;
  flex: none;
  height: 27px;
  padding-bottom: 1px;
  background: #e9e9e9;
}
.sep {
  flex: none;
  width: 5px;
  height: 24px;
  background: repeating-linear-gradient(#999 0 1px, transparent 1px 3px) 1px 0 / 1px 100% no-repeat;
}

/* tabs */
.tabbar {
  display: flex;
  gap: 2px;
  height: 23px;
  padding: 1px 0 0 6px;
  background: #ccc;
  border-bottom: 1px solid #777;
}
.tab {
  height: 22px;
  padding: 0 11px;
  border: 1px solid #777;
  background: linear-gradient(#e6e6e6, #d2d2d2);
  color: #5a5a5a;
  font-size: 13px;
  font-weight: 600;
  line-height: 18px;
  text-align: left;
}
.tab.current {
  background: linear-gradient(#f4f4f4, #e9e9e9);
  border-bottom-color: #e9e9e9;
  border-right-width: 2px;
  color: #000;
}
.tabbar .tab {
  width: 84px;
}
.tabbar .wide {
  width: 117px;
}

/* project tree */
.project {
  position: relative;
  z-index: 2;
  display: flex;
  flex: 0 0 285px;
  flex-direction: column;
  min-width: 0;
}
.project-tools {
  padding: 0 6px 1px;
}
.icon-btn {
  display: grid;
  place-items: center;
  width: 22px;
  height: 22px;
}
.icon-btn:first-child {
  width: 18px;
}
.icon-btn.on {
  border: 1px solid #2f62d8;
  border-radius: 2px;
  background: #fff;
  margin: 0 2px;
}
.icon-btn svg {
  width: 16px;
  height: 16px;
}
.band {
  flex: none;
  height: 21px;
  background: #c3c3c3;
}
.tree {
  flex: 1;
  min-height: 0;
  margin: 0;
  padding: 0;
  overflow: hidden;
  background: #efefef;
  list-style: none;
}
.node {
  display: flex;
  height: 19px;
  border-bottom: 1px solid #fff;
  border-right: 1px solid #fff;
}
.cell {
  display: flex;
  flex: 1;
  align-items: center;
  min-width: 0;
  border-right: 1px solid #c8c8c8;
}
.status {
  flex: none;
  width: 19px;
}
.shade {
  background: #e0e0e0;
}
.shade .status {
  background: #ececec;
}
.bold {
  font-weight: 600;
}
.selected {
  background: #d6dbdf;
}
.twist {
  flex: none;
  width: 16px;
  height: 16px;
}
.twist svg {
  width: 16px;
  height: 16px;
}
.ico {
  width: 16px;
  height: 16px;
  margin: 0 4px 0 2px;
}
.lbl {
  padding-top: 1px;
  white-space: nowrap;
}

/* callouts */
.mark {
  position: absolute;
  z-index: 3;
  border: 7px solid #ff7300;
  pointer-events: none;
}
.badge {
  position: absolute;
  z-index: 4;
  width: 73px;
  height: 65px;
  border: 1px solid #ff9a4a;
  border-radius: 4px;
  background: #ff7300;
  color: #fff;
  font: 48px/62px "Liberation Sans", Arial, sans-serif;
  text-align: center;
}
.mark-tree {
  top: 235px;
  right: 0;
  left: 0;
  height: 32px;
}
.badge-1 {
  top: 268px;
  left: 105px;
}

/* editor */
.center {
  display: flex;
  flex: 1;
  flex-direction: column;
  min-width: 0;
  margin: 0 3px;
}
.topband {
  flex: none;
  height: 23px;
  background: #ccc;
  border-bottom: 1px solid #777;
}
.editor-tools {
  padding-left: 3px;
  overflow: hidden;
}
.tool {
  display: grid;
  flex: none;
  place-items: center;
  width: 24px;
  height: 24px;
}
.tool svg {
  width: 20px;
  height: 20px;
}
.combo {
  display: flex;
  flex: none;
  height: 18px;
  border: 1px solid #999;
  background: #e9e9e9;
}
.combo input,
.combo select {
  flex: 1;
  min-width: 0;
  appearance: none;
}
.combo button,
.drop {
  display: grid;
  flex: none;
  place-items: center;
  width: 16px;
  border-left: 1px solid #999;
  background: linear-gradient(#f0f0f0, #d8d8d8);
}
.combo svg {
  width: 14px;
  height: 14px;
}
.drop::before {
  content: "";
  border: 4px solid transparent;
  border-top-color: #777;
  border-bottom-width: 0;
}
.font-box {
  width: 112px;
  margin: 0 8px 0 3px;
}
.size-box {
  width: 38px;
  margin-right: 5px;
}
.fmt {
  color: #444;
  font-size: 16px;
  line-height: 22px;
}
.fmt.b {
  font-weight: 700;
}
.fmt.i {
  font-family: "Liberation Serif", serif;
  font-size: 18px;
  font-style: italic;
}
.fmt.u {
  text-decoration: underline;
}
.fmt.s {
  text-decoration: line-through;
}
.fmt.a {
  display: flex;
  align-items: center;
  justify-content: center;
}
.fmt.a svg {
  align-self: flex-start;
  width: 6px;
  height: 10px;
  fill: #444;
}
.stage {
  display: flex;
  flex: 0 0 321px;
  border-top: 1px solid #444;
  border-left: 1px solid #888;
}
.canvas {
  position: relative;
  flex: 1;
  overflow: hidden;
  border-right: 1px solid #444;
  background: #c0c0c0;
}
.dots {
  position: absolute;
  inset: 0;
}
.stage-edge {
  flex: none;
  width: 5px;
  background: #94a9bb;
  border-right: 1px solid #ccc;
}
.object {
  position: absolute;
  top: 56px;
  left: 291px;
  width: 560px;
  height: 63px;
  background: #fff;
}
.object i {
  position: absolute;
  width: 4px;
  height: 4px;
  margin: -2px;
  border: 1px solid #00009c;
  background: #4fe0f8;
}
.tl,
.tc,
.tr {
  top: 0;
}
.ml,
.mr {
  top: 50%;
}
.bl,
.bc,
.br {
  top: 100%;
}
.tl,
.ml,
.bl {
  left: 0;
}
.tc,
.bc {
  left: 50%;
}
.tr,
.mr,
.br {
  left: 100%;
}
.stage-foot {
  flex: none;
  height: 18px;
  background: #efefef;
}

/* inspector */
.inspector {
  display: flex;
  flex: 1;
  flex-direction: column;
  min-height: 0;
  margin-top: 3px;
}
.title {
  display: flex;
  flex: none;
  gap: 1px;
  height: 27px;
  padding-top: 3px;
  overflow: hidden;
  border-bottom: 3px solid #efefef;
  background: #b0b0b0;
}
.title h2 {
  flex: 1;
  padding-left: 5px;
  color: #fff;
  font-size: 13px;
  font-weight: 600;
  line-height: 19px;
}
.pane {
  display: flex;
  align-items: center;
  gap: 7px;
  border: 1px solid #777;
  border-bottom: 0;
  background: linear-gradient(#e6e6e6, #d2d2d2);
  color: #5a5a5a;
  font-size: 13px;
  font-weight: 600;
  line-height: 18px;
}
.pane svg {
  width: 16px;
  height: 16px;
}
.pane.current {
  width: 112px;
  padding-left: 1px;
  border-top-color: #efefef;
  border-right-width: 2px;
  background: #efefef;
  color: #111;
}
.pane.info {
  width: 79px;
  padding-left: 2px;
}
.pane.cut {
  width: 16px;
  padding-left: 1px;
  border-right: 0;
  overflow: hidden;
}
.subtabs {
  display: flex;
  flex: none;
  gap: 1px;
  height: 25px;
  padding: 3px 0 0 6px;
  border-bottom: 1px solid #777;
  background: #ccc;
}
.subtabs .tab {
  width: 77px;
  line-height: 17px;
}
.subtabs .current {
  width: 99px;
}
.subtabs .tab:nth-child(3) {
  width: 69px;
}
.subtabs .tab:nth-child(4) {
  width: 111px;
}
.body {
  display: flex;
  flex: 1;
  min-height: 0;
  background: #e9e9e9;
}
.props {
  display: flex;
  flex: 1;
  flex-direction: column;
  min-width: 0;
}
.prop-tools {
  display: flex;
  flex: none;
  align-items: center;
  gap: 6px;
  height: 33px;
  padding: 0 0 0 9px;
}
.prop-tools svg {
  width: 18px;
  height: 18px;
}
.grid {
  position: relative;
  display: flex;
  flex: 1;
  min-height: 0;
  padding-left: 1px;
}
table {
  flex: 1;
  width: 100%;
  align-self: flex-start;
  border-spacing: 0;
  table-layout: fixed;
}
.c0 {
  width: 24px;
}
.c1 {
  width: 242px;
}
.c2 {
  width: 155px;
}
.c3 {
  width: 160px;
}
th {
  height: 20px;
  padding: 0 3px;
  border-top: 1px solid #aaa;
  border-right: 1px solid #aaa;
  border-bottom: 1px solid #aaa;
  background: linear-gradient(#ececec 45%, #cfcfcf 50%, #dedede);
  font-weight: 400;
  line-height: 17px;
  text-align: left;
}
th:last-child {
  border-right: 0;
}
th.hot {
  background: linear-gradient(#eef1f5 45%, #d3dae3 50%, #e2e6ec);
}
td {
  height: 19px;
  padding: 0;
  border-right: 1px solid #fff;
  border-bottom: 1px solid #fff;
  background: #efefef;
  line-height: 17px;
  white-space: nowrap;
}
td.gut {
  border-right-color: #aaa;
  background: #c8c8c8;
}
td.nm,
td.gray {
  background: #e0e0e0;
}
td.nm {
  border-right-color: #c0c0c0;
}
td.nm svg {
  width: 16px;
  height: 16px;
  margin: 0 6px 0 1px;
}
td.val,
td.dyn {
  padding-left: 4px;
}
.vbox {
  display: flex;
  align-items: center;
  height: 18px;
}
.vtext {
  flex: 1;
  padding-top: 1px;
}
.vbox input[type="text"] {
  width: 100%;
  height: 18px;
}
.active .gut {
  background: #c2ccd6;
}
.active .val {
  background: #fff;
  border-bottom-color: #c2ccd6;
}
input[type="checkbox"] {
  width: 14px;
  height: 14px;
  border: 1px solid #777;
  border-radius: 2px;
  appearance: none;
  background: linear-gradient(#d8d8d8, #fff);
}
input[type="checkbox"]:checked {
  border-color: #245a90;
  background: linear-gradient(#5a9ad8, #4fe0f0);
}
input[type="checkbox"]:checked::before {
  content: "";
  display: block;
  width: 5px;
  height: 8px;
  margin: 0 4px;
  border: solid #12408c;
  border-width: 0 2px 2px 0;
  rotate: 40deg;
}
.swatch {
  width: 20px;
  height: 16px;
  margin: 0 4px 0 -3px;
  border: 1px solid #111;
  background: #91939a;
}
.pick {
  width: 18px;
  height: 18px;
  border: 1px solid #777;
  background: linear-gradient(#f2f2f2, #ccc);
}
.scroll {
  display: flex;
  flex: 0 0 17px;
  flex-direction: column;
  background: #c3c3c3;
}
.corner {
  height: 20px;
  border: solid #aaa;
  border-width: 1px 0 1px 1px;
  background: linear-gradient(#ececec 45%, #cfcfcf 50%, #dedede);
}
.up {
  height: 18px;
  border: 1px solid #888;
  background: #ececec;
}
.up svg {
  width: 14px;
  height: 14px;
  margin: auto;
}
.thumb {
  display: grid;
  place-items: center;
  height: 159px;
  margin-top: 54px;
  border: 1px solid #888;
  background: linear-gradient(90deg, #f2f2f2, #cfcfcf);
  box-shadow: inset 0 0 0 1px #fff;
}
.thumb i {
  width: 8px;
  height: 8px;
  background: repeating-linear-gradient(#555 0 1px, transparent 1px 2px);
}
.splitter {
  display: flex;
  flex: 0 0 8px;
  flex-direction: column;
  gap: 10px;
  margin: 3px 0 0 1px;
  padding-top: 196px;
  border: 1px solid #888;
  border-bottom: 0;
  background: #dcdcdc;
}
.splitter button {
  width: 6px;
  height: 24px;
  border: solid #888;
  border-width: 1px 0;
  background: #bbb;
}
.splitter svg {
  width: 6px;
  height: 22px;
}
.rest {
  flex: 0 0 180px;
}
.m3,
.m4,
.m5 {
  left: 18px;
  width: 411px;
}
.m3 {
  top: 31px;
  height: 34px;
}
.m4 {
  top: 183px;
  height: 53px;
}
.m5 {
  top: 354px;
  height: 34px;
}
.b3,
.b4,
.b5 {
  left: 430px;
}
.b3 {
  top: 16px;
}
.b4 {
  top: 176px;
}
.b5 {
  top: 331px;
}

/* options */
.options {
  position: relative;
  z-index: 2;
  display: flex;
  flex: 0 0 261px;
  flex-direction: column;
  background: #efefef;
}
.opt-title {
  flex: none;
  height: 23px;
  padding-left: 5px;
  border-bottom: 1px solid #777;
  background: linear-gradient(#f4f4f4, #e6e6e6);
  font-size: 13px;
  font-weight: 600;
  line-height: 22px;
}
.opt-tools {
  gap: 7px;
  padding-bottom: 0;
  padding-left: 7px;
}
.opt-tools > svg {
  width: 16px;
  height: 16px;
}
.obj-box {
  width: 120px;
  color: #999;
}
.obj-box select {
  padding-left: 1px;
  overflow: hidden;
  opacity: 1;
  line-height: 16px;
}
.acc {
  display: flex;
  flex: none;
  align-items: center;
  height: 24px;
  border-top: 3px solid #999;
  border-bottom: 1px solid #555;
  background: linear-gradient(#ececec 50%, #d6d6d6 55%, #dcdcdc);
  font-size: 13px;
  font-weight: 600;
  text-align: left;
}
.acc:last-child {
  margin-bottom: -2px;
}
.acc svg {
  width: 20px;
  height: 20px;
  fill: none;
  stroke: #000;
  stroke-width: 2;
}
.acc span {
  height: 20px;
  padding-left: 4px;
  border-left: 1px solid #777;
  line-height: 21px;
}
.palette {
  position: relative;
  display: grid;
  flex: 1;
  grid-template-columns: repeat(5, 50px);
  grid-auto-rows: 36px;
  row-gap: 10px;
  align-content: start;
  padding-left: 3px;
}
.palette > button {
  display: grid;
  place-items: center;
}
.palette > button svg {
  width: 30px;
  height: 30px;
}
.m2 {
  top: -6px;
  left: 203px;
  width: 52px;
  height: 53px;
}
.arrow {
  position: absolute;
  top: 17px;
  left: -50px;
  z-index: 3;
  width: 254px;
  height: 44px;
  fill: #ff7300;
}
.b2 {
  top: 7px;
  left: 75px;
}

/* task card rail */
.side {
  display: flex;
  flex: 0 0 21px;
  flex-direction: column;
  gap: 2px;
  margin-left: 2px;
  padding: 1px 1px 0 0;
  background: #b0b0b0;
}
.side button {
  display: flex;
  flex: none;
  flex-direction: column;
  align-items: center;
  gap: 6px;
  padding-top: 2px;
  border: 1px solid #777;
  border-left: 0;
  background: linear-gradient(90deg, #d6d6d6 45%, #e6e6e6 55%);
  color: #5a5a5a;
  font-size: 13px;
  font-weight: 600;
}
.side button.current {
  background: #efefef;
  color: #000;
}
.side svg {
  width: 16px;
  height: 16px;
}
.side span {
  line-height: 18px;
  writing-mode: vertical-rl;
}
.toolbox {
  height: 97px;
}
.layout {
  height: 89px;
}
.tasks {
  height: 83px;
}
.libraries {
  height: 102px;
}
.addins {
  height: 95px;
}
</style>
